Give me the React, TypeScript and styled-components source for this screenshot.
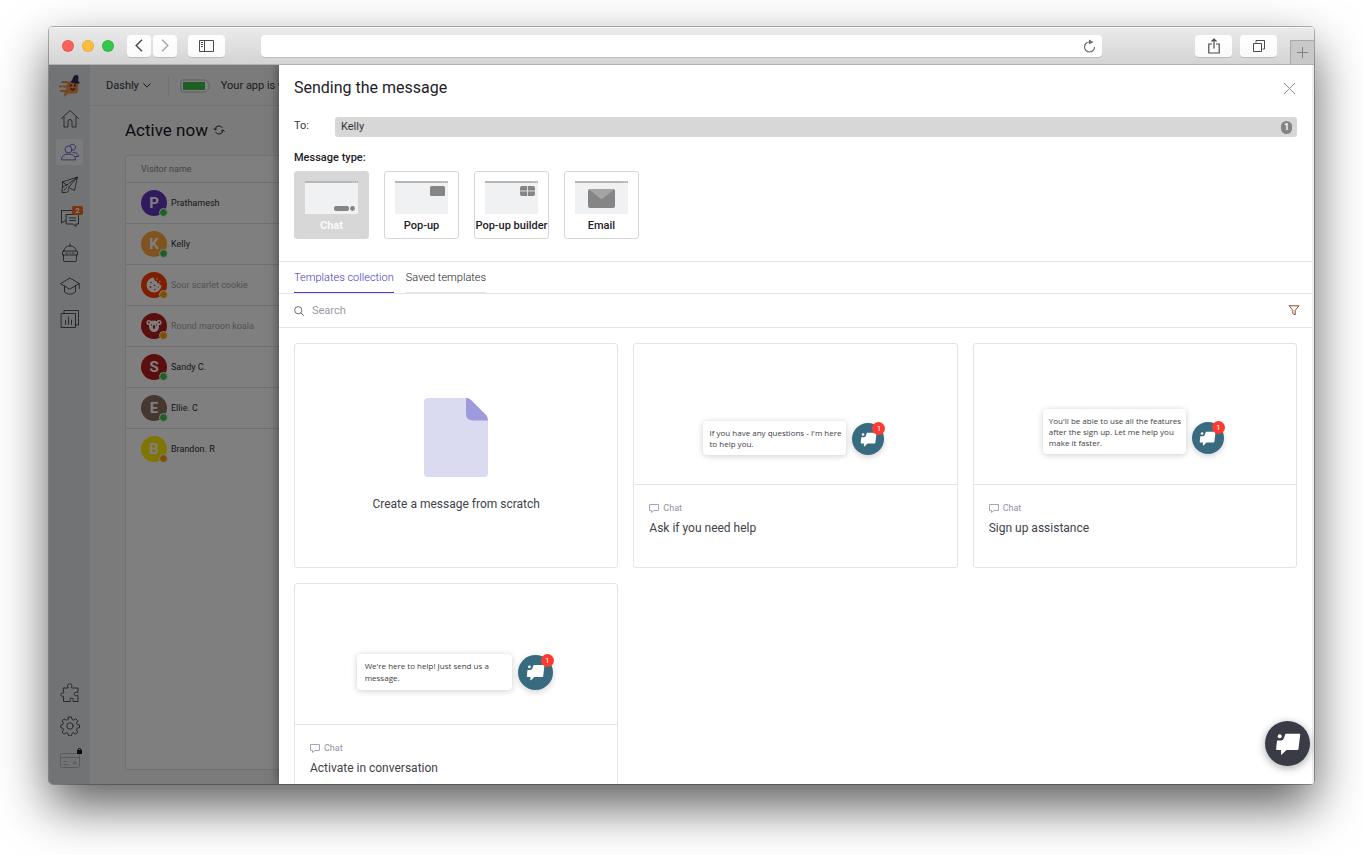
import React from "react";
import styled, { createGlobalStyle, css } from "styled-components";

const GlobalStyle = createGlobalStyle`
  *, *::before, *::after { box-sizing: border-box; }
  html, body { margin: 0; height: 100%; }
  body { background: #fff; font-family: Roboto, "Liberation Sans", sans-serif; font-size: 11px; line-height: 16px; color: #33363d; }
  #root { height: 100%; }
  button, input { font: inherit; color: inherit; }
  button { border: 0; padding: 0; background: none; cursor: pointer; }
  h1, h2, h3, p, ul { margin: 0; padding: 0; font-weight: 400; }
  svg { display: block; flex: none; }
`;

/* ---------- browser window ---------- */

const Stage = styled.div`
  height: 100vh;
  min-height: 480px;
  padding: 27px 49px 71px;
  display: flex;
  overflow: hidden;
`;

const Window = styled.div`
  flex: 1;
  min-width: 0;
  display: flex;
  flex-direction: column;
  border-radius: 4px;
  box-shadow: 0 0 0 1px rgba(0, 0, 0, 0.28), 0 22px 50px rgba(0, 0, 0, 0.64);
`;

const Toolbar = styled.header`
  height: 38px;
  flex: none;
  display: flex;
  align-items: center;
  padding-left: 13px;
  background: linear-gradient(#ebebeb, #d4d4d4);
  border-bottom: 1px solid #b0b0b0;
  border-radius: 4px 4px 0 0;
  box-shadow: inset 0 1px 0 #f5f5f5;
`;

const Lights = styled.div`
  display: flex;
  gap: 8px;
  margin-right: 13px;
`;

const Light = styled.span<{ $color: string }>`
  width: 12px;
  height: 12px;
  border-radius: 50%;
  background: ${(p) => p.$color};
  box-shadow: inset 0 0 0 1px rgba(0, 0, 0, 0.08);
`;

const ToolGroup = styled.div<{ $gap: number; $right: number }>`
  display: flex;
  gap: ${(p) => p.$gap}px;
  margin-right: ${(p) => p.$right}px;
`;

const ToolButton = styled.button<{ $wide?: boolean }>`
  width: ${(p) => (p.$wide ? 37 : 24)}px;
  height: 22px;
  display: flex;
  align-items: center;
  justify-content: center;
  background: linear-gradient(#fff, #fafafa);
  border-radius: 4px;
  box-shadow: 0 1px 0 #bdbdbd;
`;

const Address = styled.div`
  flex: 1;
  min-width: 0;
  height: 22px;
  display: flex;
  align-items: center;
  padding: 0 6px;
  margin-right: 93px;
  background: #fff;
  border-radius: 4px;
  box-shadow: 0 1px 0 #bdbdbd;

  input { flex: 1; min-width: 0; border: 0; outline: 0; background: none; }
`;

const NewTab = styled.button`
  align-self: flex-end;
  width: 24px;
  height: 24px;
  display: flex;
  align-items: center;
  justify-content: center;
  background: #c8c8c8;
  border: solid #a8a8a8;
  border-width: 1px 0 0 1px;
`;

/* ---------- application ---------- */

const AppFrame = styled.div`
  position: relative;
  flex: 1;
  min-height: 0;
  display: flex;
  overflow: hidden;
  background: #f6f6f7;
  border-radius: 0 0 3px 3px;
`;

const Rail = styled.nav`
  width: 41px;
  flex: none;
  display: flex;
  flex-direction: column;
  align-items: center;
  justify-content: space-between;
  padding: 8px 0 12px;
  background: #e4e7eb;
`;

const RailGroup = styled.div<{ $gap?: number }>`
  display: flex;
  flex-direction: column;
  align-items: center;
  gap: ${(p) => p.$gap ?? 7}px;
`;

const RailItem = styled.a<{ $active?: boolean }>`
  position: relative;
  width: 27px;
  height: 26px;
  display: flex;
  align-items: center;
  justify-content: center;
  border-radius: 2px;
  color: ${(p) => (p.$active ? "#4a44c4" : "#2c2f36")};
  background: ${(p) => (p.$active ? "#f7f7fa" : "transparent")};
`;

const RailCount = styled.span`
  position: absolute;
  top: 1px;
  right: 0;
  width: 11px;
  height: 9px;
  border-radius: 2px;
  background: #f06a1c;
  color: #fff;
  font-size: 8px;
  font-weight: 700;
  line-height: 9px;
  text-align: center;
`;

const LockMark = styled.span`
  position: absolute;
  top: 2px;
  right: 1px;
`;

const Main = styled.main`
  flex: 1;
  min-width: 0;
  display: flex;
  flex-direction: column;
`;

const AppBar = styled.div`
  height: 41px;
  flex: none;
  display: flex;
  align-items: center;
  padding: 1px 0 0 16px;
  border-bottom: 1px solid #e4e4e8;
  white-space: nowrap;
`;

const AppSwitch = styled.button`
  display: flex;
  align-items: center;
  gap: 4px;
  padding-right: 17px;
  margin-right: 11px;
  height: 20px;
  border-right: 1px solid #e2e2e6;
`;

const Battery = styled.span`
  margin-right: 11px;
`;

const Page = styled.div`
  flex: 1;
  min-height: 0;
  display: flex;
  flex-direction: column;
  padding: 12px 0 14px 35px;
`;

const PageTitle = styled.h1`
  display: flex;
  align-items: center;
  gap: 5px;
  height: 24px;
  margin-bottom: 13px;
  font-size: 17px;
  line-height: 24px;
  color: #14161b;
`;

const Panel = styled.div`
  flex: 1;
  min-height: 0;
  background: #fff;
  border: 1px solid #e2e2e6;
  border-radius: 3px;
`;

const VisitorTable = styled.table`
  width: 100%;
  border-collapse: collapse;
  font-size: 9px;
  line-height: 12px;

  th, td {
    padding: 0 0 0 15px;
    border-bottom: 1px solid #e2e2e6;
    text-align: left;
    font-weight: 400;
  }
  th { height: 26px; color: #83868f; }
  td { height: 41px; }
  tbody tr:last-child td { border-bottom-color: #fff; }
`;

const Visitor = styled.div<{ $faded?: boolean }>`
  display: flex;
  align-items: center;
  gap: 4px;
  color: ${(p) => (p.$faded ? "#a3a5ab" : "#2b2e36")};
`;

const Avatar = styled.span<{ $color: string }>`
  position: relative;
  width: 26px;
  height: 26px;
  display: flex;
  align-items: center;
  justify-content: center;
  border-radius: 50%;
  background: ${(p) => p.$color};
  color: #fff;
  font-size: 15px;
  font-weight: 700;
`;

const Presence = styled.span<{ $online: boolean }>`
  position: absolute;
  right: -1px;
  bottom: -1px;
  width: 9px;
  height: 9px;
  border-radius: 50%;
  border: 1px solid #fff;
  background: ${(p) => (p.$online ? "#3fbf48" : "#ff9d0a")};
`;

const Scrim = styled.div`
  position: absolute;
  inset: 0;
  background: rgba(0, 0, 0, 0.5);
`;

/* ---------- message drawer ---------- */

const Drawer = styled.section`
  position: absolute;
  inset: 0 0 0 230px;
  display: flex;
  flex-direction: column;
  background: #fff;
  border-right: 2px solid #eeeeee;
  box-shadow: 0 0 10px rgba(0, 0, 0, 0.5);
  overflow: hidden;
`;

const DrawerHead = styled.div`
  display: flex;
  align-items: center;
  justify-content: space-between;
  padding: 11px 16px 17px 15px;
`;

const DrawerTitle = styled.h2`
  font-size: 16px;
  line-height: 24px;
  color: #1e2127;
`;

const Recipient = styled.div`
  display: flex;
  align-items: flex-start;
  padding: 0 15px;
  margin-bottom: 12px;

  label { width: 41px; flex: none; line-height: 18px; }
`;

const RecipientField = styled.div`
  flex: 1;
  min-width: 0;
  height: 20px;
  display: flex;
  align-items: center;
  padding: 0 5px 0 6px;
  background: #d7d7d7;
  border-radius: 3px;

  input { flex: 1; min-width: 0; padding: 0; border: 0; outline: 0; background: none; }
`;

const RecipientCount = styled.span`
  width: 11px;
  height: 13px;
  border-radius: 6px;
  background: #838383;
  color: #fff;
  font-size: 9px;
  font-weight: 700;
  line-height: 13px;
  text-align: center;
`;

const TypeSection = styled.div`
  padding: 0 15px 22px;
  border-bottom: 1px solid #e3e4e6;
`;

const TypeHeading = styled.h3`
  margin-bottom: 4px;
  font-size: 11px;
  line-height: 18px;
  font-weight: 500;
  color: #1e2127;
`;

const TypeList = styled.div`
  display: flex;
  gap: 15px;
`;

const TypeCard = styled.button<{ $selected?: boolean }>`
  width: 75px;
  height: 68px;
  display: flex;
  flex-direction: column;
  align-items: center;
  gap: 4px;
  padding-top: 9px;
  border: 1px solid #d7d7d7;
  border-radius: 3px;
  background: #fff;
  font-weight: 500;
  color: #1e2127;
  white-space: nowrap;
  ${(p) => p.$selected && css`background: #d7d7d7; color: #fafafa; font-weight: 700;`}
`;

const Tabs = styled.div`
  display: flex;
  gap: 12px;
  height: 32px;
  flex: none;
  padding: 0 15px;
  border-bottom: 1px solid #e3e4e6;
`;

const Tab = styled.button<{ $active?: boolean }>`
  padding-top: 1px;
  font-weight: 300;
  border-bottom: 1px solid ${(p) => (p.$active ? "#4a44c4" : "#e3e3ea")};
  color: ${(p) => (p.$active ? "#3a33c0" : "#14161b")};
`;

const SearchBar = styled.div`
  display: flex;
  align-items: center;
  gap: 8px;
  height: 34px;
  flex: none;
  padding: 0 12px 0 15px;
  border-bottom: 1px solid #e3e4e6;

  input { flex: 1; min-width: 0; padding: 0; border: 0; outline: 0; }
  input::placeholder { color: #989ba3; opacity: 1; }
`;

const TemplateGrid = styled.div`
  display: grid;
  grid-template-columns: repeat(3, minmax(0, 1fr));
  grid-auto-rows: 225px;
  gap: 15px;
  padding: 15px;
`;

const Card = styled.article`
  display: flex;
  flex-direction: column;
  border: 1px solid #e3e4e6;
  border-radius: 3px;
  background: #fff;
`;

const ScratchCard = styled(Card)`
  align-items: center;
  padding-top: 54px;
  gap: 18px;
`;

const CardTitle = styled.h3`
  font-size: 12px;
  line-height: 18px;
  color: #40434a;
`;

const Preview = styled.div<{ $bottom: number }>`
  height: 141px;
  display: flex;
  align-items: flex-end;
  justify-content: center;
  gap: 6px;
  padding: 0 3px ${(p) => p.$bottom}px 0;
  border-bottom: 1px solid #e3e4e6;
`;

const Bubble = styled.p<{ $large?: boolean }>`
  width: ${(p) => (p.$large ? 155 : 143)}px;
  padding: ${(p) => (p.$large ? "6px 8px" : "6px")};
  border-radius: 4px;
  background: #fff;
  box-shadow: 0 1px 6px rgba(0, 0, 0, 0.2);
  color: #3c3e43;
  font-family: "Open Sans", "Noto Sans", sans-serif;
  font-size: 8px;
  line-height: ${(p) => (p.$large ? 12 : 11)}px;
  white-space: pre;
`;

const ChatBadge = styled.div<{ $size: number }>`
  position: relative;
  width: ${(p) => p.$size}px;
  height: ${(p) => p.$size}px;
  flex: none;
  display: flex;
  align-items: center;
  justify-content: center;
  border-radius: 50%;
  background: #386b80;
  box-shadow: 0 2px 6px rgba(0, 0, 0, 0.18);
`;

const Unread = styled.span`
  position: absolute;
  top: -1px;
  right: -1px;
  width: 13px;
  height: 13px;
  border-radius: 50%;
  background: #ff3b30;
  color: #fff;
  font-size: 8px;
  line-height: 13px;
  text-align: center;
`;

const CardBody = styled.div`
  padding: 16px 15px;
`;

const CardKind = styled.div`
  display: flex;
  align-items: center;
  gap: 4px;
  margin-bottom: 4px;
  font-size: 9px;
  line-height: 14px;
  color: #8f93a0;
`;

const ChatLauncher = styled.button`
  position: absolute;
  right: 4px;
  bottom: 18px;
  width: 45px;
  height: 45px;
  display: flex;
  align-items: center;
  justify-content: center;
  border-radius: 50%;
  background: #393c46;
  box-shadow: 0 2px 8px rgba(0, 0, 0, 0.35);
`;

/* ---------- drawings ---------- */

const Line: React.FC<{ size?: number; children: React.ReactNode }> = ({ size = 20, children }) => (
  <svg width={size} height={size} viewBox="0 0 20 20" fill="none" stroke="currentColor" strokeWidth="0.8" strokeLinejoin="round" strokeLinecap="round" aria-hidden="true">
    {children}
  </svg>
);

const Logo = () => (
  <svg width="24" height="24" viewBox="0 0 24 24" aria-hidden="true">
    <g stroke="#e8843a" strokeWidth="2" strokeLinecap="round">
      <path d="M4.500 8H9M2 12.500h1M5.500 12.500H11M3 17h6" />
    </g>
    <path d="M9 7.500 20.500 9 20 17.500q-.5 2-3 2H10L6.500 23 6 19.500 8 17z" fill="#f0914a" />
    <path d="M12 14c2 1 4 1 5.500 0-.3 3.200-4.500 4-5.500 0z" fill="#7a1f4a" />
    <circle cx="12.800" cy="11.500" r="1.100" fill="#3a2145" />
    <circle cx="17" cy="11.500" r="1.100" fill="#3a2145" />
    <path d="M12 7.800c2.800-.6 2.400-4.800 4.500-6.300L19.300.8l1.200 2.400-.3 3.600 1.800 2.400c-3.500 1-7.500.3-10-1.400z" fill="#352a52" />
  </svg>
);

const HomeIcon = () => <Line><path d="M1.500 9.500 10 1.500l8.500 8M4 8v10h4v-5.500a2 2 0 0 1 4 0V18h4V8" /></Line>;
const PeopleIcon = () => (
  <Line>
    <circle cx="8.500" cy="7.500" r="3.500" />
    <path d="M1.500 17.500c0-3.500 3-5.500 7-5.500s7 2 7 5.500zM9.500 4a3.200 3.200 0 1 1 3.500 4.500M13 10.500c3.500 0 5.500 1.500 5.500 4H15" />
  </Line>
);
const PlaneIcon = () => (
  <Line><path d="M2.500 7 17.500 2 14.500 15.500 10.500 13.500M2.500 7 7 10 17.500 2 9 12M7 10C4 10.500 2 12 2 15v2.500h3.500c2.500 0 3.500-1.500 3.500-5.500M2.500 7v5M4 15.500l2.500-3" /></Line>
);
const ChatsIcon = () => (
  <Line><path d="M1.500 2.500H14V5M1.500 2.500V15l3-2H6M6.500 6.500h12V16H16v2.500L13 16H6.500zM9.500 10h6M9.500 12.500h6" /></Line>
);
const BotIcon = () => (
  <Line>
    <path d="M10 .8V3M4 8c0-3 2.500-5 6-5s6 2 6 5M3.500 8h13q1 0 1 1v3h-15V9q0-1 1-1zM3.500 12v5.500q0 1 1 1h11q1 0 1-1V12M6 10h1.500M9.700 10h.8M12.500 10H14" />
  </Line>
);
const AcademyIcon = () => (
  <Line><path d="M.8 7.500 10 2l9.200 5.500L10 13zM4.500 10v6q5.500 4.500 11 0v-6M19.200 7.500v5" /></Line>
);
const ReportsIcon = () => (
  <Line><path d="M1.500 4.500h14v14h-14zM4 4.500v-3h14.500V16h-3M5.500 15.500v-4M8.500 15.500V8M11.500 15.500v-4.500" /></Line>
);
const PuzzleIcon = () => (
  <Line><path d="M3.500 5H8c.5-.8-.4-1.200-.4-2.200 0-2.800 4.300-2.800 4.300 0 0 1-.9 1.400-.4 2.200H18v4.500c-.8.500-1.200-.3-2-.3-2.300 0-2.300 3.600 0 3.600.8 0 1.200-.8 2-.3V18.500h-5c-.5-.8.300-1.200.300-2 0-2-3.300-2-3.300 0 0 .8.500 1.200.300 2H3.500V13.300c-.5-.5-.7 0-1.300 0-2 0-2-3.200 0-3.200.6 0 .8.500 1.300 0z" /></Line>
);
const GearIcon = () => (
  <Line>
    <circle cx="10" cy="10" r="3.200" />
    <path d="M8.500 1h3l.5 2.500 1.600.7 2.200-1.400 2 2-1.400 2.200.7 1.600 2.400.5v2.500l-2.400.6-.7 1.700 1.400 2.200-2 2-2.200-1.400-1.600.7-.5 2.400h-3L8 17.400l-1.700-.7-2.200 1.400-2-2 1.400-2.200-.7-1.700L.8 11.600V9.100l2-.5.7-1.600-1.400-2.200 2-2 2.200 1.400L8 3.500z" />
  </Line>
);
const BillingIcon = () => (
  <svg width="20" height="20" viewBox="0 0 20 20" fill="none" stroke="#b4b7be" aria-hidden="true">
    <rect x=".5" y="4.500" width="19" height="14" rx="1" />
    <path d="M.5 8.500h19M3.500 12.500h3M3.500 15.500h5" />
    <circle cx="15" cy="14" r="1.200" />
  </svg>
);
const LockIcon = () => (
  <svg width="5" height="6" viewBox="0 0 5 6" aria-hidden="true">
    <path d="M1 2.500V2a1.500 1.500 0 0 1 3 0v.5" fill="none" stroke="#15161a" />
    <rect y="2" width="5" height="4" fill="#15161a" />
  </svg>
);
const RefreshIcon = () => (
  <svg width="12" height="12" viewBox="0 0 12 12" fill="none" stroke="#2c2f36" aria-hidden="true">
    <path d="M2 5.500a4 4 0 0 1 7.500-1.500M10 6.500A4 4 0 0 1 2.500 8M.5 4.500 2 6.200l1.800-1.500M8.200 7.300 10 5.800l1.500 1.700" />
  </svg>
);
const BatteryIcon = () => (
  <svg width="30" height="14" viewBox="0 0 30 14" aria-hidden="true">
    <path d="M2.500 1h22q2 0 2.500 1.500L29 5v4l-2 2.500Q26.500 13 24.500 13h-22Q1 13 1 11.500v-9Q1 1 2.500 1z" fill="#fff" stroke="#b9bac8" />
    <rect x="3" y="3" width="22" height="8" fill="#3fbf48" />
  </svg>
);
const CookieIcon = () => (
  <svg width="16" height="16" viewBox="0 0 16 16" aria-hidden="true">
    <path d="M8 .5A7.500 7.500 0 1 0 15.500 8c-1.500.3-2.200-.5-2-1.800-1.800.6-3-.5-2.500-2-2 .3-3-1.500-3-3.700z" fill="#fff" />
    <g fill="#ff3d00"><circle cx="5" cy="5.500" r=".8" /><circle cx="4.500" cy="10" r=".9" /><circle cx="8.500" cy="8.500" r=".8" /><circle cx="9" cy="12.500" r=".8" /><circle cx="12.200" cy="10" r=".6" /></g>
    <circle cx="11" cy="2" r=".7" fill="#fff" /><circle cx="13.800" cy="4.500" r=".7" fill="#fff" />
  </svg>
);
const KoalaIcon = () => (
  <svg width="16" height="14" viewBox="0 0 16 14" aria-hidden="true">
    <g fill="#fff"><circle cx="3" cy="3.500" r="2.600" /><circle cx="13" cy="3.500" r="2.600" /><path d="M8 1.500c4 0 5 3 5 6S11 13 8 13 3 10.500 3 7.500s1-6 5-6z" /></g>
    <g fill="#b71c1c"><circle cx="2.800" cy="3.500" r=".9" /><circle cx="13.200" cy="3.500" r=".9" /><circle cx="5.500" cy="6" r=".7" /><circle cx="10.500" cy="6" r=".7" /><ellipse cx="8" cy="8" rx="1.200" ry="2" /></g>
  </svg>
);
const ChatGlyph: React.FC<{ size: number }> = ({ size }) => (
  <svg width={size} height={size} viewBox="0 0 26 26" fill="#fff" aria-hidden="true">
    <path d="M10.500 2.800H24.500q.8 0 .7.800L23.500 18q-.2 1-1.200 1H11.500L6.800 23.600q-.8.400-.8-.4V19H2q-1 0-.9-1L2 9.500h4q2.500 0 3-2.700z" />
    <circle cx="4.700" cy="5.300" r="2" />
  </svg>
);
const KindIcon = () => (
  <svg width="10" height="10" viewBox="0 0 10 10" fill="none" stroke="#a3a7b8" aria-hidden="true">
    <path d="M.5 1.500h9v6H5L2.500 9.500v-2h-2z" />
  </svg>
);
const DocumentIcon = () => (
  <svg width="64" height="79" viewBox="0 0 64 79" aria-hidden="true">
    <path d="M4 0h39q2 0 3.500 1.500L62 17q2 2 2 5v53q0 4-4 4H4q-4 0-4-4V4q0-4 4-4z" fill="#dadaf1" />
    <path d="M42 0q3 0 5 2l15 15q2 2 2 5.500H49q-7 0-7-7z" fill="#9d9bdc" />
  </svg>
);

type Kind = "chat" | "popup" | "builder" | "email";

const TypeThumb: React.FC<{ kind: Kind }> = ({ kind }) => (
  <svg width="53" height="33" viewBox="0 0 53 33" aria-hidden="true">
    <rect width="53" height="33" fill="#f0f1f3" />
    <rect width="53" height="2" fill="#b5b5b5" />
    <path d="M47 1h1M49 1h1M51 1h1" stroke="#d8d8d8" />
    {kind === "chat" && <><rect x="29" y="25" width="15" height="5" rx="2" fill="#858585" /><circle cx="47.500" cy="27.500" r="2.400" fill="#858585" /></>}
    {kind === "popup" && <rect x="35" y="5" width="15" height="10" rx="1.500" fill="#858585" />}
    {kind === "builder" && <><rect x="35" y="5" width="15" height="10" rx="2" fill="#858585" /><path d="M42.500 5v10M35 10h15" stroke="#f0f1f3" strokeWidth=".8" /></>}
    {kind === "email" && <><rect x="13" y="8" width="27" height="19" rx="2" fill="#858585" /><path d="M14 8.500 26.500 18.500 39 8.500q-.5-.5-1-.5H15q-.5 0-1 .5z" fill="#a4a4a4" /></>}
  </svg>
);

/* ---------- data ---------- */

const visitors: { name: string; color: string; mark: React.ReactNode; online: boolean; faded?: boolean }[] = [
  { name: "Prathamesh", color: "#6335bd", mark: "P", online: true },
  { name: "Kelly", color: "#ffa83c", mark: "K", online: true },
  { name: "Sour scarlet cookie", color: "#ff3d00", mark: <CookieIcon />, online: false, faded: true },
  { name: "Round maroon koala", color: "#b71c1c", mark: <KoalaIcon />, online: false, faded: true },
  { name: "Sandy C.", color: "#b71c1c", mark: "S", online: true },
  { name: "Ellie. C", color: "#8d6e63", mark: "E", online: true },
  { name: "Brandon. R", color: "#ffea00", mark: "B", online: false },
];

const types: { kind: Kind; label: string }[] = [
  { kind: "chat", label: "Chat" },
  { kind: "popup", label: "Pop-up" },
  { kind: "builder", label: "Pop-up builder" },
  { kind: "email", label: "Email" },
];

const templates = [
  { title: "Ask if you need help", text: "If you have any questions - I'm here\nto help you.", bottom: 29 },
  { title: "Sign up assistance", text: "You'll be able to use all the features\nafter the sign up. Let me help you\nmake it faster.", bottom: 30 },
  { title: "Activate in conversation", text: "We're here to help! Just send us a\nmessage.", bottom: 34, large: true },
];

type RailEntry = { label: string; icon: React.ReactNode; active?: boolean; count?: number };

const railSections: RailEntry[][] = [
  [
    { label: "Dashly home", icon: <Logo /> },
    { label: "Home", icon: <HomeIcon /> },
    { label: "Visitors", icon: <PeopleIcon />, active: true },
    { label: "Campaigns", icon: <PlaneIcon /> },
    { label: "Conversations", icon: <ChatsIcon />, count: 2 },
  ],
  [
    { label: "Bots", icon: <BotIcon /> },
    { label: "Academy", icon: <AcademyIcon /> },
    { label: "Reports", icon: <ReportsIcon /> },
  ],
];

export default function App() {
  return (
    <>
      <GlobalStyle />
      <Stage>
        <Window>
          <Toolbar>
            <Lights><Light $color="#fc605c" /><Light $color="#fdbc40" /><Light $color="#34c84a" /></Lights>
            <ToolGroup $gap={2} $right={11}>
              <ToolButton aria-label="Back">
                <svg width="8" height="13" viewBox="0 0 8 13" fill="none" stroke="#4a4a4a" strokeWidth="1.500"><path d="M7 .8 1.200 6.500 7 12.200" /></svg>
              </ToolButton>
              <ToolButton aria-label="Forward">
                <svg width="8" height="13" viewBox="0 0 8 13" fill="none" stroke="#a8a8a8" strokeWidth="1.500"><path d="M1 .8 6.800 6.500 1 12.200" /></svg>
              </ToolButton>
            </ToolGroup>
            <ToolGroup $gap={0} $right={36}>
              <ToolButton $wide aria-label="Show sidebar">
                <svg width="15" height="12" viewBox="0 0 15 12" fill="none" stroke="#4a4a4a"><path d="M.5.5h14v11H.5zM5.500.5v11M2 2.500h2M2 4.500h2M2 6.500h2" /></svg>
              </ToolButton>
            </ToolGroup>
            <Address>
              <input aria-label="Address" />
              <button aria-label="Reload">
                <svg width="13" height="14" viewBox="0 0 13 14" fill="none" stroke="#6c6c6c"><path d="M6.500 3A5 5 0 1 0 11.500 8" strokeWidth="1.200" /><path d="M6 .5v5L10.500 3z" fill="#6c6c6c" stroke="none" /></svg>
              </button>
            </Address>
            <ToolGroup $gap={8} $right={13}>
              <ToolButton $wide aria-label="Share">
                <svg width="12" height="16" viewBox="0 0 12 16" fill="none" stroke="#4a4a4a" strokeWidth="1.200"><path d="M4 6H.8v9h10.400V6H8M6 10.500V1M3.500 3.500 6 1l2.500 2.500" /></svg>
              </ToolButton>
              <ToolButton $wide aria-label="Show all tabs">
                <svg width="12" height="12" viewBox="0 0 12 12" fill="none" stroke="#4a4a4a"><path d="M.5 3.500h8v8h-8zM3 2.500v-2h8.500V9H9.500" /></svg>
              </ToolButton>
            </ToolGroup>
            <NewTab aria-label="New tab">
              <svg width="11" height="11" viewBox="0 0 11 11" stroke="#808080"><path d="M5.500 0v11M0 5.500h11" /></svg>
            </NewTab>
          </Toolbar>

          <AppFrame>
            <Rail>
              <RailGroup $gap={9}>
                {railSections.map((section, i) => (
                  <RailGroup key={i}>
                    {section.map((item) => (
                      <RailItem key={item.label} href="#" aria-label={item.label} $active={item.active}>
                        {item.icon}
                        {item.count && <RailCount>{item.count}</RailCount>}
                      </RailItem>
                    ))}
                  </RailGroup>
                ))}
              </RailGroup>
              <RailGroup>
                <RailItem href="#" aria-label="Integrations"><PuzzleIcon /></RailItem>
                <RailItem href="#" aria-label="Settings"><GearIcon /></RailItem>
                <RailItem href="#" aria-label="Billing"><BillingIcon /><LockMark><LockIcon /></LockMark></RailItem>
              </RailGroup>
            </Rail>

            <Main>
              <AppBar>
                <AppSwitch>
                  Dashly
                  <svg width="8" height="5" viewBox="0 0 8 5" fill="none" stroke="#2c2f36"><path d="M.5.5 4 4 7.500.5" /></svg>
                </AppSwitch>
                <Battery><BatteryIcon /></Battery>
                <span>Your app is w</span>
              </AppBar>
              <Page>
                <PageTitle>Active now <RefreshIcon /></PageTitle>
                <Panel>
                  <VisitorTable>
                    <thead><tr><th>Visitor name</th></tr></thead>
                    <tbody>
                      {visitors.map((v) => (
                        <tr key={v.name}>
                          <td>
                            <Visitor $faded={v.faded}>
                              <Avatar $color={v.color}>{v.mark}<Presence $online={v.online} /></Avatar>
                              {v.name}
                            </Visitor>
                          </td>
                        </tr>
                      ))}
                    </tbody>
                  </VisitorTable>
                </Panel>
              </Page>
            </Main>

            <Scrim />

            <Drawer role="dialog" aria-labelledby="drawer-title">
              <DrawerHead>
                <DrawerTitle id="drawer-title">Sending the message</DrawerTitle>
                <button aria-label="Close">
                  <svg width="13" height="13" viewBox="0 0 13 13" stroke="#8a8a8a"><path d="M1 1l11 11M12 1 1 12" /></svg>
                </button>
              </DrawerHead>
              <Recipient>
                <label htmlFor="recipient">To:</label>
                <RecipientField>
                  <input id="recipient" defaultValue="Kelly" />
                  <RecipientCount>1</RecipientCount>
                </RecipientField>
              </Recipient>
              <TypeSection>
                <TypeHeading>Message type:</TypeHeading>
                <TypeList>
                  {types.map((t) => (
                    <TypeCard key={t.kind} $selected={t.kind === "chat"} aria-pressed={t.kind === "chat"}>
                      <TypeThumb kind={t.kind} />
                      {t.label}
                    </TypeCard>
                  ))}
                </TypeList>
              </TypeSection>
              <Tabs role="tablist">
                <Tab role="tab" aria-selected="true" $active>Templates collection</Tab>
                <Tab role="tab" aria-selected="false">Saved templates</Tab>
              </Tabs>
              <SearchBar>
                <svg width="10" height="10" viewBox="0 0 10 10" fill="none" stroke="#55585f"><circle cx="4.200" cy="4.200" r="3.600" strokeWidth=".9" /><path d="m6.800 6.800 2.900 2.900" /></svg>
                <input type="search" aria-label="Search" placeholder="Search" />
                <button aria-label="Filter">
                  <svg width="12" height="11" viewBox="0 0 12 11" fill="none" stroke="#8a4b2c"><path d="M1 .8h10L7.200 5.300v4.500L4.800 8.600V5.300z" /></svg>
                </button>
              </SearchBar>
              <TemplateGrid>
                <ScratchCard>
                  <DocumentIcon />
                  <CardTitle>Create a message from scratch</CardTitle>
                </ScratchCard>
                {templates.map((t) => (
                  <Card key={t.title}>
                    <Preview $bottom={t.bottom}>
                      <Bubble $large={t.large}>{t.text}</Bubble>
                      <ChatBadge $size={t.large ? 35 : 32}>
                        <ChatGlyph size={t.large ? 19 : 17} />
                        <Unread>1</Unread>
                      </ChatBadge>
                    </Preview>
                    <CardBody>
                      <CardKind><KindIcon />Chat</CardKind>
                      <CardTitle>{t.title}</CardTitle>
                    </CardBody>
                  </Card>
                ))}
              </TemplateGrid>
            </Drawer>

            <ChatLauncher aria-label="Open chat"><ChatGlyph size={26} /></ChatLauncher>
          </AppFrame>
        </Window>
      </Stage>
    </>
  );
}
